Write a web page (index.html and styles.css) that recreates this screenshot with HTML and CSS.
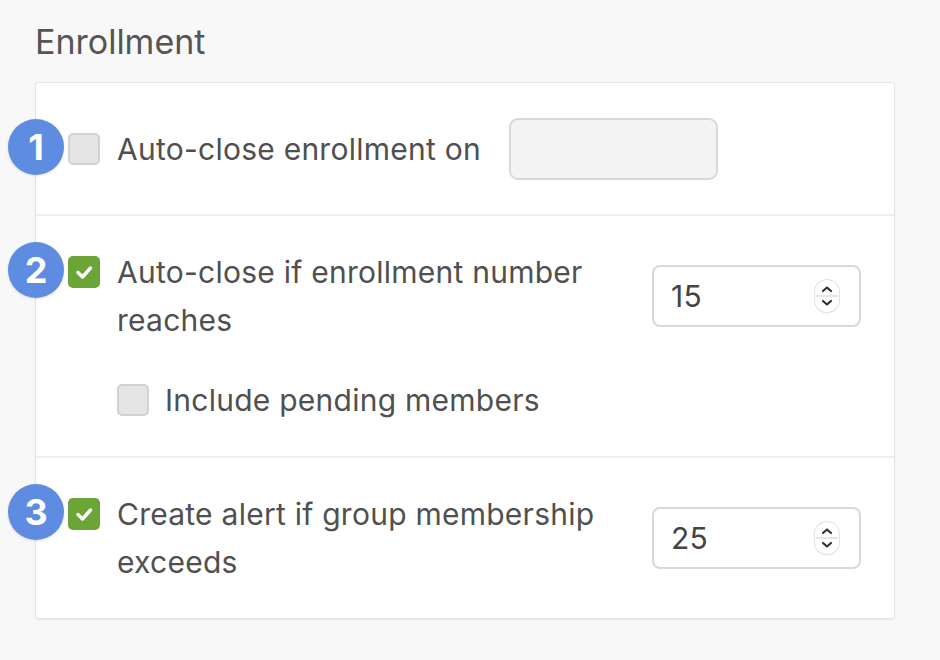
FILE: index.html
```html
<!DOCTYPE html>
<html lang="en">
<head>
<meta charset="utf-8">
<title>Enrollment</title>
<link rel="stylesheet" href="styles.css">
</head>
<body>
<div class="page">
  <h2 class="title">Enrollment</h2>
  <div class="card">
    <div class="section sec-1">
      <div class="cb-wrap">
        <span class="badge">1</span>
        <span class="cb"></span>
      </div>
      <span class="label inline">Auto-close enrollment on</span>
      <div class="date-box"></div>
    </div>

    <div class="section">
      <div class="row">
        <div class="cb-wrap top">
          <span class="badge">2</span>
          <span class="cb checked"><svg viewBox="0 0 32 32" width="32" height="32"><polyline points="10,16.5 14.5,21 22.5,12" fill="none" stroke="#fff" stroke-width="3.4" stroke-linecap="round" stroke-linejoin="round"/></svg></span>
        </div>
        <span class="label">Auto-close if enrollment number reaches</span>
        <div class="num-box"><span class="num">15</span><span class="spin"><svg viewBox="0 0 24 32" width="24" height="32"><polyline points="8,11 12,7.5 16,11" fill="none" stroke="#333" stroke-width="2.2" stroke-linecap="round" stroke-linejoin="round"/><line x1="1" y1="16" x2="23" y2="16" stroke="#dcdcdc" stroke-width="1.5"/><polyline points="8,21 12,24.5 16,21" fill="none" stroke="#333" stroke-width="2.2" stroke-linecap="round" stroke-linejoin="round"/></svg></span></div>
      </div>
      <div class="sub-row">
        <span class="cb"></span>
        <span class="label">Include pending members</span>
      </div>
    </div>

    <div class="section">
      <div class="row">
        <div class="cb-wrap top">
          <span class="badge">3</span>
          <span class="cb checked"><svg viewBox="0 0 32 32" width="32" height="32"><polyline points="10,16.5 14.5,21 22.5,12" fill="none" stroke="#fff" stroke-width="3.4" stroke-linecap="round" stroke-linejoin="round"/></svg></span>
        </div>
        <span class="label">Create alert if group membership exceeds</span>
        <div class="num-box"><span class="num">25</span><span class="spin"><svg viewBox="0 0 24 32" width="24" height="32"><polyline points="8,11 12,7.5 16,11" fill="none" stroke="#333" stroke-width="2.2" stroke-linecap="round" stroke-linejoin="round"/><line x1="1" y1="16" x2="23" y2="16" stroke="#dcdcdc" stroke-width="1.5"/><polyline points="8,21 12,24.5 16,21" fill="none" stroke="#333" stroke-width="2.2" stroke-linecap="round" stroke-linejoin="round"/></svg></span></div>
      </div>
    </div>
  </div>
</div>
</body>
</html>
```

FILE: styles.css
```css
html, body {
  margin: 0;
  padding: 0;
  background: #f8f8f8;
}

body {
  font-family: "Inter", "Liberation Sans", sans-serif;
  color: #505050;
  width: 940px;
  height: 660px;
  overflow: hidden;
}

.page {
  padding: 22px 0 0 35px;
}

.title {
  margin: 0 0 20px 0;
  font-size: 34px;
  font-weight: 400;
  line-height: 40px;
  color: #555;
}

.card {
  width: 858px;
  background: #fff;
  border: 1px solid #e4e4e4;
  border-radius: 3px;
  box-shadow: 0 1px 2px rgba(0, 0, 0, 0.06);
}

.section {
  padding: 32px 33px 32px 32px;
  border-top: 2px solid #efefef;
}

.section:first-child {
  border-top: none;
}

.sec-1 {
  display: flex;
  align-items: center;
  padding-top: 35px;
  padding-bottom: 34px;
}

.row {
  display: flex;
  align-items: flex-start;
}

.cb-wrap {
  position: relative;
  flex: none;
  width: 32px;
  height: 32px;
  margin-right: 17px;
}

.cb-wrap.top {
  margin-top: 8px;
}

.cb {
  display: flex;
  align-items: center;
  justify-content: center;
  box-sizing: border-box;
  width: 32px;
  height: 32px;
  border-radius: 5px;
  background: #e5e5e5;
  border: 2px solid #d2d2d2;
  flex: none;
}

.cb.checked {
  background: #6ba535;
  border: none;
}

.cb svg {
  display: block;
}

.badge {
  position: absolute;
  left: -60px;
  top: -14px;
  width: 56px;
  height: 56px;
  border-radius: 50%;
  background: #5d8ce0;
  color: #fff;
  font-size: 36px;
  font-weight: 700;
  line-height: 56px;
  text-align: center;
  box-shadow: 0 1px 3px rgba(0, 0, 0, 0.12);
}

.label {
  flex: 1;
  font-size: 30px;
  letter-spacing: 0.25px;
  line-height: 48px;
  color: #505050;
}

.label.inline {
  flex: none;
}

.date-box {
  width: 209px;
  height: 62px;
  box-sizing: border-box;
  margin-left: 28px;
  background: #f3f3f3;
  border: 2px solid #d8d8d8;
  border-radius: 9px;
}

.num-box {
  flex: none;
  align-self: center;
  display: flex;
  align-items: center;
  justify-content: space-between;
  box-sizing: border-box;
  width: 209px;
  height: 62px;
  margin-left: 32px;
  padding: 0 20px 0 17px;
  border: 2px solid #d8d8d8;
  border-radius: 8px;
  background: #fff;
}

.num {
  font-size: 30px;
  letter-spacing: 0.25px;
  color: #444;
}

.spin {
  display: block;
  width: 24px;
  height: 32px;
  box-sizing: border-box;
  border-radius: 12px;
  background: #fff;
  box-shadow: 0 0 0 1px #e2e2e2, 0 1px 2px rgba(0, 0, 0, 0.1);
  overflow: hidden;
}

.spin svg {
  display: block;
}

.sub-row {
  display: flex;
  align-items: center;
  margin-top: 32px;
  padding-left: 49px;
}

.sub-row .cb {
  margin-right: 16px;
}
```
